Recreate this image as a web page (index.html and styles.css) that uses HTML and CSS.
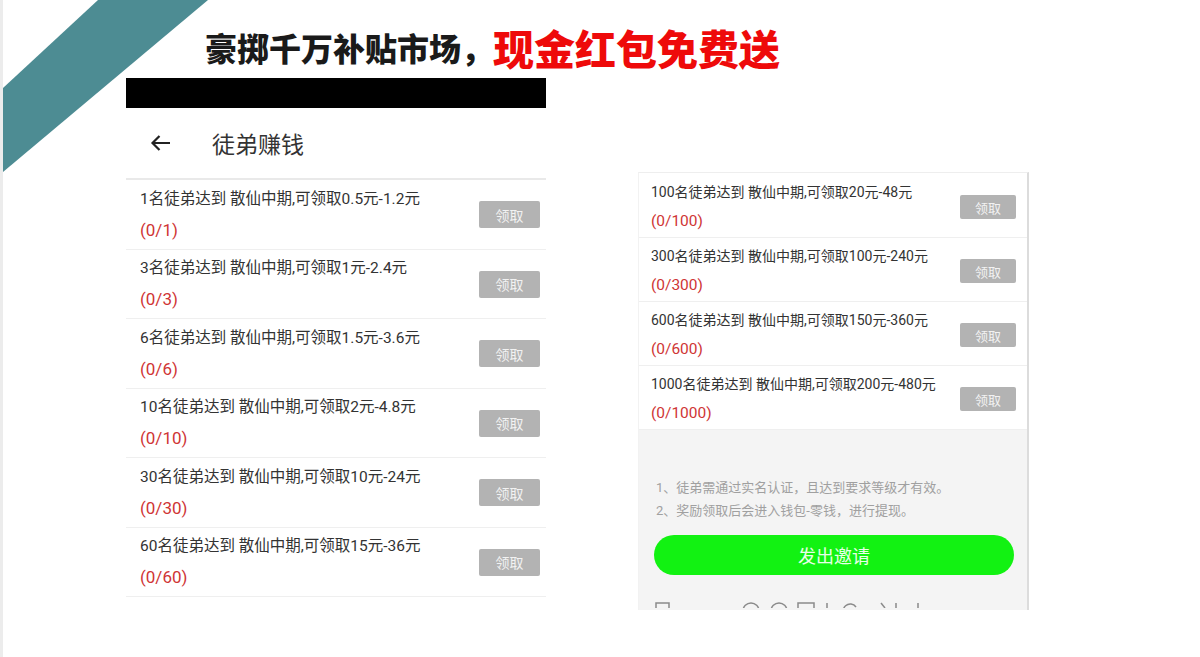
FILE: index.html
```html
<!DOCTYPE html>
<html lang="zh-CN">
<head>
<meta charset="utf-8">
<title>徒弟赚钱</title>
<link rel="stylesheet" href="styles.css">
</head>
<body>
<div class="slide">
  <svg class="band" width="210" height="180" viewBox="0 0 210 180"><polygon points="95,0 205,0 0,172 0,88" fill="#4d8c93"/></svg>
  <h1 class="title"><span class="t-black">豪掷千万补贴市场，</span><span class="t-red">现金红包免费送</span></h1>
  <div class="shots">
    <section class="phone phone-left">
      <div class="statusbar"></div>
      <header class="appbar">
        <svg class="back" width="21" height="18" viewBox="0 0 21 18"><path d="M20 9H2.5M9.5 2L2.5 9l7 7" fill="none" stroke="#222" stroke-width="2.2"/></svg>
        <span class="appbar-title">徒弟赚钱</span>
      </header>
      <ul class="tasks">
        <li class="task"><div class="task-info"><p class="task-desc">1名徒弟达到 散仙中期,可领取0.5元-1.2元</p><p class="task-prog">(0/1)</p></div><button class="claim">领取</button></li>
        <li class="task"><div class="task-info"><p class="task-desc">3名徒弟达到 散仙中期,可领取1元-2.4元</p><p class="task-prog">(0/3)</p></div><button class="claim">领取</button></li>
        <li class="task"><div class="task-info"><p class="task-desc">6名徒弟达到 散仙中期,可领取1.5元-3.6元</p><p class="task-prog">(0/6)</p></div><button class="claim">领取</button></li>
        <li class="task"><div class="task-info"><p class="task-desc">10名徒弟达到 散仙中期,可领取2元-4.8元</p><p class="task-prog">(0/10)</p></div><button class="claim">领取</button></li>
        <li class="task"><div class="task-info"><p class="task-desc">30名徒弟达到 散仙中期,可领取10元-24元</p><p class="task-prog">(0/30)</p></div><button class="claim">领取</button></li>
        <li class="task"><div class="task-info"><p class="task-desc">60名徒弟达到 散仙中期,可领取15元-36元</p><p class="task-prog">(0/60)</p></div><button class="claim">领取</button></li>
      </ul>
    </section>
    <section class="phone phone-right">
      <ul class="tasks tasks-sm">
        <li class="task"><div class="task-info"><p class="task-desc">100名徒弟达到 散仙中期,可领取20元-48元</p><p class="task-prog">(0/100)</p></div><button class="claim">领取</button></li>
        <li class="task"><div class="task-info"><p class="task-desc">300名徒弟达到 散仙中期,可领取100元-240元</p><p class="task-prog">(0/300)</p></div><button class="claim">领取</button></li>
        <li class="task"><div class="task-info"><p class="task-desc">600名徒弟达到 散仙中期,可领取150元-360元</p><p class="task-prog">(0/600)</p></div><button class="claim">领取</button></li>
        <li class="task"><div class="task-info"><p class="task-desc">1000名徒弟达到 散仙中期,可领取200元-480元</p><p class="task-prog">(0/1000)</p></div><button class="claim">领取</button></li>
      </ul>
      <div class="footer">
        <div class="notes">
          <p>1、徒弟需通过实名认证，且达到要求等级才有效。</p>
          <p>2、奖励领取后会进入钱包-零钱，进行提现。</p>
        </div>
        <button class="invite">发出邀请</button>
        <svg class="toolbar" width="388" height="6" viewBox="0 0 388 6">
          <g fill="none" stroke="#8a8a8a" stroke-width="1.5">
            <rect x="17" y="1" width="13" height="12"/>
            <circle cx="112" cy="9" r="8"/>
            <circle cx="140" cy="9" r="8"/>
            <rect x="159" y="1" width="16" height="12"/>
            <path d="M188 1v10"/>
            <path d="M217 5a7 7 0 1 0 0 8"/>
            <path d="M242 1l4 5"/>
            <path d="M257 1v10"/>
            <path d="M279 1v10"/>
          </g>
        </svg>
      </div>
    </section>
  </div>
</div>
</body>
</html>
```
FILE: styles.css
```css
* { box-sizing: border-box; }
html, body { margin: 0; padding: 0; background: #fff; }
.slide {
  position: relative;
  width: 1200px;
  height: 657px;
  overflow: hidden;
  background: #fff;
  border-left: 3px solid #ececec;
  font-family: Roboto, "Noto Sans CJK SC", sans-serif;
}
.band { position: absolute; left: 0; top: 0; }
.title {
  margin: 0;
  height: 78px;
  padding: 16px 0 0 202px;
  display: flex;
  align-items: center;
  font-family: "Noto Sans CJK SC", sans-serif;
  font-weight: 900;
  line-height: 1;
}
.t-black { font-size: 32px; color: #1a1a1a; }
.t-red { font-size: 41px; color: #ee0a0a; }
.shots {
  display: flex;
  align-items: flex-start;
  gap: 92px;
  padding-left: 123px;
}
.phone-left { width: 420px; }
.statusbar { height: 30px; background: #000; }
.appbar {
  height: 72px;
  display: flex;
  align-items: center;
  gap: 41px;
  padding-left: 24px;
  border-bottom: 2px solid #e9e9e9;
}
.back { display: block; }
.appbar-title { font-size: 23px; color: #333; }
.tasks { list-style: none; margin: 0; padding: 0; }
.task {
  display: flex;
  align-items: center;
  justify-content: space-between;
  height: 69.5px;
  padding: 1px 6px 0 14px;
  border-bottom: 1px solid #efefef;
}
.task-info p { margin: 0; }
.task-desc { font-size: 15.5px; line-height: 20px; color: #333; }
.task-prog { font-size: 17px; line-height: 22px; color: #cf3535; margin-top: 10px !important; }
.claim {
  width: 61px;
  height: 27px;
  border: 0;
  border-radius: 2px;
  background: #b3b3b3;
  color: #f2f2f2;
  font-family: "Noto Sans CJK SC", sans-serif;
  font-size: 14px;
  padding: 0;
}
.phone-right {
  width: 391px;
  margin-top: 94px;
  height: 438px;
  border-top: 1px solid #eee;
  border-left: 1px solid #f2f2f2;
  border-right: 2px solid #dcdcdc;
  padding-top: 1px;
  display: flex;
  flex-direction: column;
}
.tasks-sm .task {
  height: 64px;
  padding: 3px 11px 0 12px;
}
.tasks-sm .task-desc { font-size: 14px; line-height: 18px; }
.tasks-sm .task-prog { font-size: 15.5px; line-height: 20px; margin-top: 10px !important; }
.tasks-sm .claim { width: 56px; height: 24px; font-size: 13px; }
.footer {
  flex: 1;
  background: #f4f4f4;
  padding: 46px 13px 0 15px;
  display: flex;
  flex-direction: column;
  overflow: hidden;
}
.notes p { margin: 0; font-size: 13px; line-height: 23px; color: #a0a0a0; padding-left: 2px; }
.invite {
  margin-top: 13px;
  height: 40px;
  border: 0;
  border-radius: 20px;
  background: #12f212;
  color: #e8ffe8;
  font-family: "Noto Sans CJK SC", sans-serif;
  font-size: 18px;
  padding: 0;
}
.toolbar { display: block; margin: 27px 0 0 -15px; }
```
